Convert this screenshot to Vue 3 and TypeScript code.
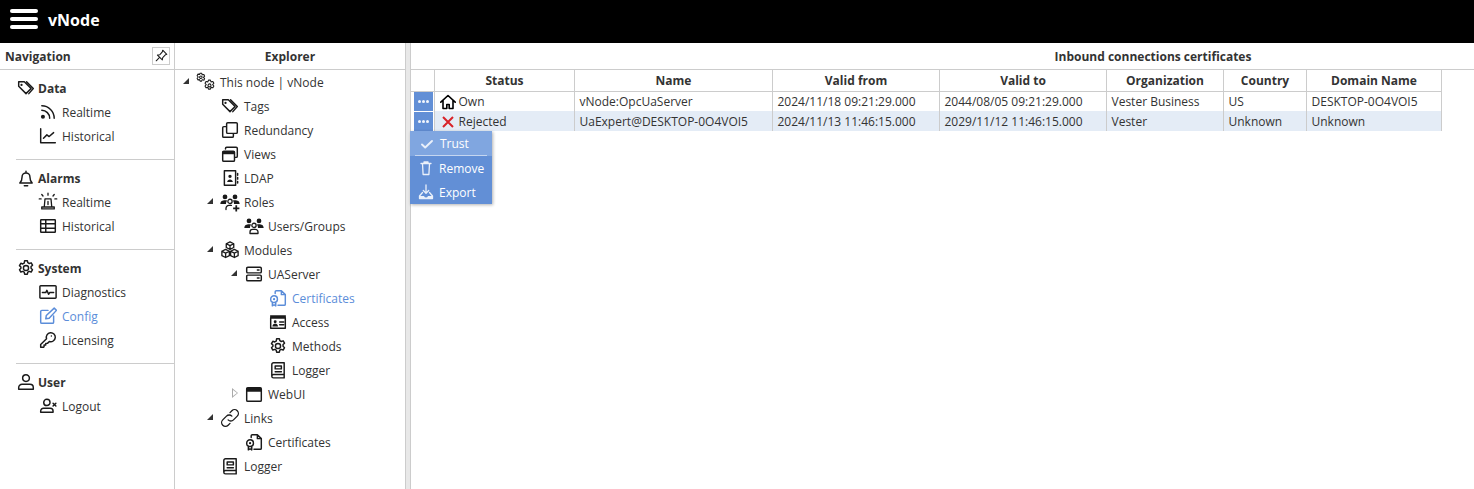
<script setup lang="ts">
type Ic = { p: string; f?: string };
const icons: Record<string, Ic> = {
  tags: { p: 'M1.500 2.500h5l6 6-4.500 4.500-6.500-6.500zM8.500 2.500l6 6-4 4.500', f: 'M4 4.300a1 1 0 1 1 0 2 1 1 0 0 1 0-2z' },
  rss: { p: 'M2.500 2.500a11 11 0 0 1 11 11M2.500 6.500a7 7 0 0 1 7 7', f: 'M3.500 10.500a1.800 1.800 0 1 1 0 3.600 1.800 1.800 0 0 1 0-3.600z' },
  chart: { p: 'M1.500 1.500v12.500h13M4 10l3-3 2 1.500L13 5' },
  bell: { p: 'M2.500 12.500h11c-1.500-1.500-2-2.500-2-5.500a3.500 3.500 0 0 0-7 0c0 3-.5 4-2 5.500zM6.500 14.800h3M8 2v1.500' },
  siren: { p: 'M3 13.500h10v-1.500H3zM5 12l.6-6.500h4.800L11 12M8 7.500v2.500M1 5.500h1.500M13.500 5.500H15M3 2l1 1.200M13 2l-1 1.200M8 1v1.500' },
  table: { p: 'M2 2.500h12a.5.5 0 0 1 .5.5v10a.5.5 0 0 1-.5.5H2a.5.5 0 0 1-.5-.5V3a.5.5 0 0 1 .5-.5zM1.500 6h13M1.500 10h13M6 2.500v11' },
  gear: { p: 'M6.800 1.500h2.400l.4 1.800 1.300.7 1.700-.6 1.200 2.100-1.300 1.200v1.600l1.300 1.200-1.200 2.100-1.700-.6-1.300.7-.4 1.800H6.800l-.4-1.800-1.300-.7-1.700.6-1.200-2.100 1.300-1.200V7.100L2.200 5.900l1.200-2.100 1.700.6 1.300-.7zM8 5.700a2.200 2.200 0 1 0 0 4.600 2.200 2.200 0 0 0 0-4.600z' },
  monitor: { p: 'M1.500 2.500h13a.7.7 0 0 1 .7.7v9.600a.7.7 0 0 1-.7.7h-13a.7.7 0 0 1-.7-.7V3.200a.7.7 0 0 1 .7-.7zM3 8.500h3l1-2 1.500 3.500 1-1.500H13' },
  edit: { p: 'M8 3H2.500a1 1 0 0 0-1 1v9.500a1 1 0 0 0 1 1H12a1 1 0 0 0 1-1V8M6 10.500l.5-3 7-6.500 2 2-6.500 7z' },
  key: { p: 'M1.500 14.500v-2.500l5.200-5.200a4 4 0 1 1 2.500 2.500L7.500 11H6v1.500H4.500V14l-.5.500zM11 4.500h.01' },
  user: { p: 'M8 1.500a3 3 0 1 0 0 6 3 3 0 0 0 0-6zM1.500 14.500v-1.500a3 3 0 0 1 3-3h7a3 3 0 0 1 3 3v1.500z' },
  logout: { p: 'M7 2a2.800 2.800 0 1 0 0 5.600A2.800 2.800 0 0 0 7 2zM1.500 13.500v-1a2.500 2.500 0 0 1 2.500-2.500h6a2.500 2.500 0 0 1 2.500 2.500v1zM12.500 5.500l2.500 2.500M15 5.500L12.500 8' },
  pin: { p: 'M9.500 1.500l5 5-1.500.5-3.500 3.500-.5 3-6-6 3-.5L9 3.500zM5 11l-3.500 3.500' },
  gears: { p: 'M4.500 1l.5 1.200 1.300-.2.600 1.300-.9 1 .9 1-.6 1.300L5 6.100l-.5 1.200H3.300l-.5-1.200-1.300.2-.6-1.300.9-1-.9-1 .6-1.300 1.300.2L3.300 1zM3.900 3.200a1 1 0 1 0 0 2 1 1 0 0 0 0-2zM11.500 6.500l.5 1.400 1.500-.3.800 1.400-1 1.100 1 1.100-.8 1.400-1.500-.3-.5 1.400H10l-.5-1.400-1.500.3-.8-1.400 1-1.100-1-1.100.8-1.400 1.500.3.500-1.400zM10.800 9.500a1.200 1.200 0 1 0 0 2.400 1.200 1.200 0 0 0 0-2.400z' },
  copy: { p: 'M6 1.500h7.500a1 1 0 0 1 1 1V10a1 1 0 0 1-1 1H6a1 1 0 0 1-1-1V2.500a1 1 0 0 1 1-1zM5 5H2.500a1 1 0 0 0-1 1v7.500a1 1 0 0 0 1 1H10a1 1 0 0 0 1-1V11' },
  windows: { p: 'M2.500 5.500H11a1 1 0 0 1 1 1v7a1 1 0 0 1-1 1H2.500a1 1 0 0 1-1-1v-7a1 1 0 0 1 1-1zM4 3.500V3a1 1 0 0 1 1-1h8.500a1 1 0 0 1 1 1v7a1 1 0 0 1-1 1H12', f: 'M1.500 5.500H12V8.200H1.500z' },
  book: { p: 'M3 1.500h10v13H3zM14.800 4v1.500M14.800 7.500V9M14.800 11v1.500', f: 'M8 5a1.500 1.500 0 1 1 0 3 1.500 1.500 0 0 1 0-3zM5.500 11.500c0-3 5-3 5 0z' },
  roles: { p: 'M8 5.800a1.700 1.700 0 1 0 0 3.400 1.700 1.700 0 0 0 0-3.400zM4.800 14v-1a2.300 2.300 0 0 1 2.300-2.300h2', f: 'M4 2a1.900 1.900 0 1 1 0 3.800A1.900 1.900 0 0 1 4 2zM.3 9.500c0-2.200 1.700-2.900 3.700-2.900.8 0 1.300.1 1.800.4-.7.500-1 1.500-1 2.500zM12 2a1.900 1.900 0 1 1 0 3.800A1.900 1.900 0 0 1 12 2zM15.700 9.500c0-2.200-1.700-2.900-3.700-2.900-.8 0-1.300.1-1.800.4.700.5 1 1.500 1 2.500zM12.300 10.500h1.400v1.800h1.800v1.400h-1.800v1.800h-1.400v-1.800h-1.800v-1.400h1.800z' },
  users: { p: 'M8 5.800a1.700 1.700 0 1 0 0 3.400 1.700 1.700 0 0 0 0-3.400zM4.800 14v-1.200a2.100 2.100 0 0 1 2.100-2.100h2.200a2.100 2.100 0 0 1 2.100 2.100V14z', f: 'M4 2a1.900 1.900 0 1 1 0 3.800A1.900 1.900 0 0 1 4 2zM.3 9.500c0-2.200 1.700-2.900 3.700-2.900.8 0 1.300.1 1.800.4-.7.500-1 1.500-1 2.500zM12 2a1.900 1.900 0 1 1 0 3.800A1.900 1.900 0 0 1 12 2zM15.700 9.500c0-2.200-1.700-2.900-3.700-2.900-.8 0-1.300.1-1.800.4.700.5 1 1.500 1 2.500z' },
  cubes: { p: 'M8 1.500l3 1.500v3L8 7.500 5 6V3zM4.500 7.500l3 1.500v3.500l-3 1.500-3-1.500V9zM11.500 7.500l3 1.500v3.500l-3 1.500-3-1.500V9zM5 3l3 1.500L11 3M8 4.500v3M1.500 9l3 1.500L7.500 9M4.500 10.500V14M8.500 9l3 1.500 3-1.500M11.500 10.500V14' },
  server: { p: 'M2.500 2h11a1 1 0 0 1 1 1v3a1 1 0 0 1-1 1h-11a1 1 0 0 1-1-1V3a1 1 0 0 1 1-1zM2.500 9h11a1 1 0 0 1 1 1v3a1 1 0 0 1-1 1h-11a1 1 0 0 1-1-1v-3a1 1 0 0 1 1-1zM11 4.500h1.500M11 11.500h1.500' },
  cert: { p: 'M5.500 4V2.500a1 1 0 0 1 1-1h4.500l3.500 3.500v8.500a1 1 0 0 1-1 1H8M11 1.500V5h3.500M4.500 6a3 3 0 1 0 0 6 3 3 0 0 0 0-6zM3 11.500v3.500l1.500-1 1.500 1v-3.500', f: 'M4.500 8a1 1 0 1 1 0 2 1 1 0 0 1 0-2z' },
  card: { p: 'M1.500 4.500h13v9h-13zM9.500 8h3.500M9.500 10.500h3.500', f: 'M1 2h14v2.500H1zM5.500 6.500a1.300 1.300 0 1 1 0 2.600 1.300 1.300 0 0 1 0-2.600zM3 12c0-2 1.500-2.500 2.500-2.500S8 10 8 12z' },
  win: { p: 'M2.500 2.500h11a1 1 0 0 1 1 1v10a1 1 0 0 1-1 1h-11a1 1 0 0 1-1-1v-10a1 1 0 0 1 1-1z', f: 'M1.500 2.500h13V6h-13z' },
  logger: { p: 'M4 1.500h9.500V12H4a1.500 1.500 0 0 0-1.500 1.500V3A1.500 1.500 0 0 1 4 1.500zM2.500 13.500A1.500 1.500 0 0 0 4 15h9.500v-3M5.500 4.500h5.500v2.500H5.500zM5.500 9.500h5.500' },
  link: { p: 'M6.500 9.500a3 3 0 0 0 4.300 0l3-3a3 3 0 0 0-4.300-4.300L8 3.700M9.500 6.500a3 3 0 0 0-4.300 0l-3 3a3 3 0 0 0 4.300 4.300L8 12.300' },
  home: { p: 'M.8 8.200L8 1.500l7.200 6.700M3 6.500v8h3.800v-4h2.400v4H13v-8' },
  x: { p: 'M3 3l10 10M13 3L3 13' },
  check: { p: 'M3 8.500l3.200 3L13 5' },
  trash: { p: 'M3 3.500h10M6 3.500V2h4v1.500M4.500 3.500l.6 11h5.800l.6-11' },
  export: { p: 'M8 1v8M5.300 6.500L8 9.200l2.700-2.700M4.500 8.500L1.500 12v2.500h13V12l-3-3.500', f: 'M2 12h4l1 1.500h2l1-1.500h4v2.500H2z' },
};
const bigIcons = ['roles', 'users', 'cubes', 'siren', 'link'];

const navGroups = [
  { name: 'Data', icon: 'tags', items: [{ t: 'Realtime', i: 'rss' }, { t: 'Historical', i: 'chart' }] },
  { name: 'Alarms', icon: 'bell', items: [{ t: 'Realtime', i: 'siren' }, { t: 'Historical', i: 'table' }] },
  { name: 'System', icon: 'gear', items: [{ t: 'Diagnostics', i: 'monitor' }, { t: 'Config', i: 'edit', on: true }, { t: 'Licensing', i: 'key' }] },
  { name: 'User', icon: 'user', items: [{ t: 'Logout', i: 'logout' }] },
];

const tree = [
  { t: 'This node | vNode', i: 'gears', l: 0, a: 'open', wide: true },
  { t: 'Tags', i: 'tags', l: 1 },
  { t: 'Redundancy', i: 'copy', l: 1 },
  { t: 'Views', i: 'windows', l: 1 },
  { t: 'LDAP', i: 'book', l: 1 },
  { t: 'Roles', i: 'roles', l: 1, a: 'open' },
  { t: 'Users/Groups', i: 'users', l: 2 },
  { t: 'Modules', i: 'cubes', l: 1, a: 'open' },
  { t: 'UAServer', i: 'server', l: 2, a: 'open' },
  { t: 'Certificates', i: 'cert', l: 3, on: true },
  { t: 'Access', i: 'card', l: 3 },
  { t: 'Methods', i: 'gear', l: 3 },
  { t: 'Logger', i: 'logger', l: 3 },
  { t: 'WebUI', i: 'win', l: 2, a: 'closed' },
  { t: 'Links', i: 'link', l: 1, a: 'open' },
  { t: 'Certificates', i: 'cert', l: 2 },
  { t: 'Logger', i: 'logger', l: 1 },
];

const cols = [
  { t: '', w: 23 }, { t: 'Status', w: 140 }, { t: 'Name', w: 198 }, { t: 'Valid from', w: 167 },
  { t: 'Valid to', w: 167 }, { t: 'Organization', w: 117 }, { t: 'Country', w: 83 }, { t: 'Domain Name', w: 135 },
];
const rows = [
  { s: 'Own', i: 'home', c: ['vNode:OpcUaServer', '2024/11/18 09:21:29.000', '2044/08/05 09:21:29.000', 'Vester Business', 'US', 'DESKTOP-0O4VOI5'] },
  { s: 'Rejected', i: 'x', sel: true, c: ['UaExpert@DESKTOP-0O4VOI5', '2024/11/13 11:46:15.000', '2029/11/12 11:46:15.000', 'Vester', 'Unknown', 'Unknown'] },
];
const menu = [{ t: 'Trust', i: 'check', hot: true }, { t: 'Remove', i: 'trash' }, { t: 'Export', i: 'export' }];
</script>

<template>
  <div class="app">
    <header class="top">
      <div class="burger"><span></span><span></span><span></span></div>
      <div class="brand">vNode</div>
    </header>
    <div class="body">
      <aside class="nav">
        <div class="nav-head">
          <span class="nav-title">Navigation</span>
          <button class="pin">
            <svg class="ic pin-ic" viewBox="0 0 16 16"><path :d="icons.pin.p" /></svg>
          </button>
        </div>
        <section v-for="g in navGroups" :key="g.name" class="group">
          <div class="group-head">
            <svg class="ic" viewBox="0 0 16 16">
              <path :d="icons[g.icon].p" />
              <path v-if="icons[g.icon].f" class="fill" :d="icons[g.icon].f" />
            </svg>
            <span>{{ g.name }}</span>
          </div>
          <div v-for="it in g.items" :key="it.t" class="nav-item" :class="{ on: it.on }">
            <svg class="ic" :class="{ big: bigIcons.includes(it.i) }" viewBox="0 0 16 16">
              <path :d="icons[it.i].p" />
              <path v-if="icons[it.i].f" class="fill" :d="icons[it.i].f" />
            </svg>
            <span>{{ it.t }}</span>
          </div>
        </section>
      </aside>

      <aside class="explorer">
        <div class="exp-head">Explorer</div>
        <div class="tree">
          <div v-for="(n, k) in tree" :key="k" class="node" :class="[`lvl${n.l}`, { on: n.on }]">
            <span class="arrow" :class="n.a"></span>
            <svg class="ic" :class="{ wide: n.wide, big: bigIcons.includes(n.i) }" viewBox="0 0 16 16">
              <path v-if="icons[n.i].p" :d="icons[n.i].p" />
              <path v-if="icons[n.i].f" class="fill" :d="icons[n.i].f" />
            </svg>
            <span class="label">{{ n.t }}</span>
          </div>
        </div>
      </aside>

      <div class="split"></div>

      <main class="main">
        <div class="main-head">Inbound connections certificates</div>
        <table class="grid">
          <colgroup><col v-for="c in cols" :key="c.t" :style="{ width: c.w + 'px' }" /></colgroup>
          <thead>
            <tr><th v-for="c in cols" :key="c.t">{{ c.t }}</th></tr>
          </thead>
          <tbody>
            <tr v-for="r in rows" :key="r.s" :class="{ sel: r.sel }">
              <td class="btn-cell"><button class="dots"><i></i><i></i><i></i></button></td>
              <td class="status">
                <svg class="ic st" :class="r.i" viewBox="0 0 16 16"><path :d="icons[r.i].p" /></svg>
                <span>{{ r.s }}</span>
              </td>
              <td v-for="v in r.c" :key="v">{{ v }}</td>
            </tr>
          </tbody>
        </table>
        <div class="menu">
          <div v-for="m in menu" :key="m.t" class="menu-item" :class="{ hot: m.hot }">
            <svg class="ic" :class="m.i" viewBox="0 0 16 16">
              <path :d="icons[m.i].p" />
              <path v-if="icons[m.i].f" class="fill" :d="icons[m.i].f" />
            </svg>
            <span>{{ m.t }}</span>
          </div>
        </div>
      </main>
    </div>
  </div>
</template>

<style>
html, body { margin: 0; background: #fff; overflow: hidden; }
</style>

<style scoped>
.app { width: 1474px; height: 489px; display: flex; flex-direction: column; overflow: hidden; font: 12px "Open Sans", sans-serif; color: #333; background: #fff; }
.top { height: 43px; flex: none; background: #000; color: #fff; display: flex; align-items: center; padding-left: 10px; gap: 10px; box-sizing: border-box; }
.burger { width: 28px; display: flex; flex-direction: column; gap: 4px; margin-bottom: 5px; }
.burger span { height: 4px; border-radius: 2px; background: #fff; }
.brand { font-size: 16px; font-weight: 700; margin-bottom: 3px; }
.body { flex: 1; display: flex; min-height: 0; }
.ic { width: 18px; height: 18px; margin: 0 -1px; flex: none; fill: none; stroke: #1a1a1a; stroke-width: 1.3; stroke-linejoin: round; stroke-linecap: round; }
.ic .fill { fill: #1a1a1a; stroke: none; }
.ic.big { width: 20px; height: 20px; margin: 0 -2px; stroke-width: 1.05; }
.nav { width: 175px; flex: none; box-sizing: border-box; border-right: 1px solid #ccc; }
.nav-head { height: 27px; box-sizing: border-box; padding: 0 4px 0 5px; border-bottom: 1px solid #ccc; display: flex; align-items: center; justify-content: space-between; }
.nav-title { font-weight: 700; }
.pin { width: 18px; height: 18px; padding: 0; border: 1px solid #ccc; background: #fff; display: flex; align-items: center; justify-content: center; margin-top: -1px; }
.ic.pin-ic { width: 13px; height: 13px; margin: 0; }
.group { margin-left: 16px; padding: 6px 0 11px; border-bottom: 1px solid #ccc; }
.group:last-child { border-bottom: 0; }
.group-head, .nav-item { height: 24px; display: flex; align-items: center; }
.group-head { font-weight: 700; gap: 4px; padding-left: 2px; }
.nav-item { padding-left: 24px; gap: 6px; }
.nav-item.on { color: #5b8dd9; }
.nav-item.on .ic { stroke: #5b8dd9; }
.explorer { width: 230px; flex: none; display: flex; flex-direction: column; }
.exp-head { height: 27px; box-sizing: border-box; border-bottom: 1px solid #ccc; font-weight: 700; display: flex; align-items: center; justify-content: center; }
.node { height: 24px; display: flex; align-items: center; gap: 6px; position: relative; }
.lvl0 { padding-left: 30px; }
.lvl1 { padding-left: 47px; }
.lvl2 { padding-left: 71px; }
.lvl3 { padding-left: 95px; }
.lvl0 .ic.wide { width: 20px; height: 20px; margin-left: -9px; margin-right: -2px; stroke-width: .85; }
.node.on { color: #5b8dd9; }
.node.on .ic { stroke: #5b8dd9; }
.node.on .ic .fill { fill: #5b8dd9; }
.arrow { position: absolute; width: 0; height: 0; margin-top: -2px; }
.arrow.open { border-left: 6px solid transparent; border-bottom: 6px solid #333; margin-left: -15px; }
.lvl0 .arrow.open { margin-left: -22px; }
.arrow.closed { border-left: 6px solid #aaa; border-top: 5px solid transparent; border-bottom: 5px solid transparent; margin-left: -14px; }
.arrow.closed::after { content: ""; position: absolute; left: -5px; top: -3px; border-left: 4px solid #fff; border-top: 3px solid transparent; border-bottom: 3px solid transparent; }
.split { width: 6px; flex: none; background: #e8e8e8; border-left: 1px solid #ccc; border-right: 1px solid #ccc; box-sizing: border-box; }
.main { flex: 1; position: relative; min-width: 0; }
.main-head { height: 27px; box-sizing: border-box; border-bottom: 1px solid #ccc; font-weight: 700; display: flex; align-items: center; justify-content: center; padding-left: 421px; }
.grid { border-collapse: collapse; table-layout: fixed; width: 1030px; }
th, td { padding: 0 4px 0 5px; white-space: nowrap; overflow: hidden; border-right: 1px solid #ccc; box-sizing: border-box; }
th { height: 21px; font-weight: 700; border-bottom: 1px solid #ccc; text-align: center; }
td { height: 20px; }
tr.sel td { background: #e4ecf6; }
tr.sel td.btn-cell { background: #fff; }
td.btn-cell { padding: 0 0 0 3px; }
.dots { width: 19px; height: 19px; padding: 0; border: 0; background: #628fd6; display: flex; align-items: center; justify-content: center; gap: 1px; }
.dots i { width: 3px; height: 3px; border-radius: 50%; background: #f2f6fc; }
.status > * { vertical-align: middle; }
.ic.st { width: 16px; height: 16px; margin: 0 3px 0 0; }
.st.home { stroke-width: 1.6; stroke: #000; }
.st.x { stroke: #d8232a; stroke-width: 2; stroke-linecap: butt; }
.menu { position: absolute; left: -1px; top: 88px; width: 82px; background: #628fd6; color: #fff; box-shadow: 1px 1px 3px rgba(0,0,0,.3); }
.menu-item { height: 24px; display: flex; align-items: center; gap: 5px; padding-left: 8px; }
.menu-item.hot { height: 25px; background: #80a6e0; position: relative; padding-left: 9px; }
.menu-item.hot::after { content: ""; position: absolute; left: 5px; right: 5px; bottom: 0; height: 1px; background: #c5d6f0; }
.menu .ic { width: 16px; height: 16px; margin: 0; stroke: #eaf0fa; }
.menu .ic.check { stroke-width: 1.9; }
.menu .ic .fill { fill: #eaf0fa; }
</style>
